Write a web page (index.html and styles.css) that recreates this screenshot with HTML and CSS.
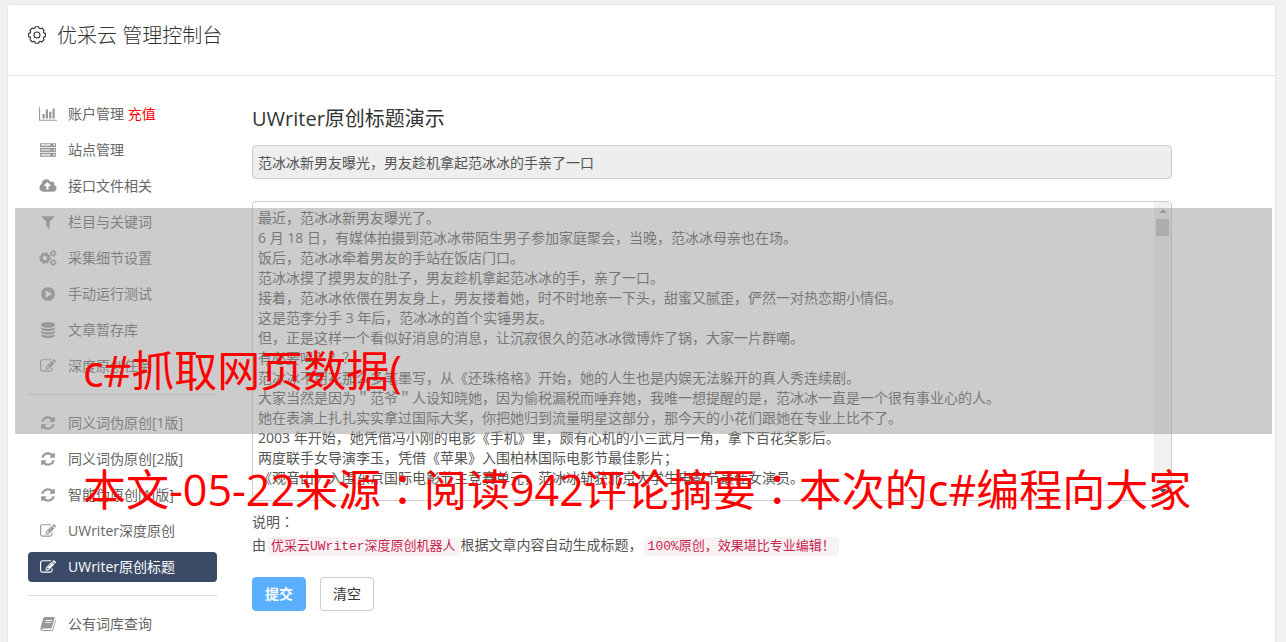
FILE: index.html
```html
<!DOCTYPE html>
<html lang="zh-CN">
<head>
<meta charset="utf-8">
<title>优采云 管理控制台</title>
<link rel="stylesheet" href="styles.css">
</head>
<body>
<svg class="sprite" aria-hidden="true">
  <symbol id="i-chart" viewBox="0 0 2048 1792"><path d="M640 896v512h-256v-512h256zm384-512v1024h-256v-1024h256zm1024 1152v128h-2048v-1536h128v1408h1920zm-640-896v768h-256v-768h256zm384-384v1152h-256v-1152h256z"/></symbol>
  <symbol id="i-server" viewBox="0 0 1792 1792"><path fill-rule="evenodd" d="M0 128h1792v448h-1792zM128 256v128h1024v-128zM1504 320a96 96 0 1 0 192 0a96 96 0 1 0-192 0zM0 672h1792v448h-1792zM128 832v128h1024v-128zM1504 896a96 96 0 1 0 192 0a96 96 0 1 0-192 0zM0 1216h1792v448h-1792zM128 1376v128h1024v-128zM1504 1440a96 96 0 1 0 192 0a96 96 0 1 0-192 0z"/></symbol>
  <symbol id="i-cloud" viewBox="0 0 1920 1792"><path d="M1280 864q0-14-9-23l-352-352q-9-9-23-9t-23 9l-351 351q-10 12-10 24 0 14 9 23t23 9h224v352q0 13 9.500 22.500t22.500 9.500h192q13 0 22.500-9.500t9.500-22.500v-352h224q13 0 22.500-9.500t9.500-22.500zm640 288q0 159-112.500 271.500t-271.500 112.500h-1088q-185 0-316.500-131.500t-131.500-316.500q0-130 70-240t188-165q-2-30-2-43 0-212 150-362t362-150q156 0 285.500 87t188.500 231q71-62 166-62 106 0 181 75t75 181q0 76-41 138 130 31 213.500 135.500t83.500 238.500z"/></symbol>
  <symbol id="i-filter" viewBox="0 0 1792 1792"><path d="M1595 295q17 41-14 70l-493 493v742q0 42-39 59-13 5-25 5-27 0-45-19l-256-256q-19-19-19-45v-486l-493-493q-31-29-14-70 17-39 59-39h1280q42 0 59 39z"/></symbol>
  <symbol id="i-cogs" viewBox="0 0 18 16"><g fill="none" stroke="currentColor"><circle cx="6" cy="8" r="3.500" stroke-width="2.600"/><circle cx="6" cy="8" r="5.200" stroke-width="1.600" stroke-dasharray="2.040 2.040"/><circle cx="14.200" cy="3.500" r="1.900" stroke-width="1.400"/><circle cx="14.200" cy="3.500" r="2.900" stroke-width="1" stroke-dasharray="1.500 1.500"/><circle cx="14.200" cy="12.500" r="1.900" stroke-width="1.400"/><circle cx="14.200" cy="12.500" r="2.900" stroke-width="1" stroke-dasharray="1.500 1.500"/></g></symbol>
  <symbol id="i-play" viewBox="0 0 1792 1792"><path d="M896 128q209 0 385.500 103t279.500 279.500 103 385.500-103 385.500-279.500 279.500-385.500 103-385.500-103-279.500-279.500-103-385.500 103-385.500 279.500-279.500 385.500-103zm384 823q32-18 32-55t-32-55l-544-320q-31-19-64-1-32 19-32 56v640q0 37 32 56 16 8 32 8 17 0 32-9z"/></symbol>
  <symbol id="i-db" viewBox="0 0 1792 1792"><path d="M896 768q237 0 443-43t325-127v170q0 69-103 128t-280 93.500-385 34.500-385-34.500-280-93.500-103-128v-170q119 84 325 127t443 43zm0 768q237 0 443-43t325-127v170q0 69-103 128t-280 93.500-385 34.500-385-34.500-280-93.500-103-128v-170q119 84 325 127t443 43zm0-384q237 0 443-43t325-127v170q0 69-103 128t-280 93.500-385 34.500-385-34.500-280-93.500-103-128v-170q119 84 325 127t443 43zm0-1152q208 0 385 34.500t280 93.500 103 128v128q0 69-103 128t-280 93.500-385 34.500-385-34.500-280-93.500-103-128v-128q0-69 103-128t280-93.500 385-34.500z"/></symbol>
  <symbol id="i-edit" viewBox="0 0 1792 1792"><path d="M888 1184l116-116-152-152-116 116v56h96v96h56zm440-720q-16-16-33 1l-350 350q-17 17-1 33t33-1l350-350q17-17 1-33zm80 594v190q0 119-84.500 203.500t-203.500 84.500h-832q-119 0-203.500-84.500t-84.500-203.500v-832q0-119 84.500-203.500t203.500-84.500h832q63 0 117 25 15 7 18 23 3 17-9 29l-49 49q-14 14-32 8-23-6-45-6h-832q-66 0-113 47t-47 113v832q0 66 47 113t113 47h832q66 0 113-47t47-113v-126q0-13 9-22l64-64q15-15 35-7t20 29zm-96-738l288 288-672 672h-288v-288zm444 132l-92 92-288-288 92-92q28-28 68-28t68 28l152 152q28 28 28 68t-28 68z"/></symbol>
  <symbol id="i-refresh" viewBox="0 0 1792 1792"><path d="M1639 1056q0 5-1 7-64 268-268 434.500t-478 166.500q-146 0-282.500-55t-243.500-157l-129 129q-19 19-45 19t-45-19-19-45v-448q0-26 19-45t45-19h448q26 0 45 19t19 45-19 45l-137 137q71 66 161 102t187 36q134 0 250-65t186-179q11-17 53-117 8-23 30-23h192q13 0 22.500 9.500t9.500 22.500zm25-800v448q0 26-19 45t-45 19h-448q-26 0-45-19t-19-45 19-45l138-138q-148-137-349-137-134 0-250 65t-186 179q-11 17-53 117-8 23-30 23h-199q-13 0-22.500-9.500t-9.500-22.500v-7q65-268 270-434.500t480-166.500q146 0 284 55.500t245 156.500l130-129q19-19 45-19t45 19 19 45z"/></symbol>
  <symbol id="i-book" viewBox="0 0 16 16"><path fill-rule="evenodd" d="M5 1h8.500q1.500 0 1 1.600l-2.700 9q-.3 1-1.300 1H2.600q-.8 0-.6.900.2.500 1.200.500h8.300q.7 0 1-.8l3-9.800q.8.600.4 1.700l-2.700 8.700q-.4 1.200-1.700 1.200H3q-2 0-2.500-1.700-.2-.6 0-1.300L3 3Q3.600 1 5 1zM6 4l-.3.900h6.200l.3-.9zM5.300 6.200l-.3.900h6.200l.3-.9z"/></symbol>
</svg>

<div class="panel">
  <header class="header">
    <svg class="gear" viewBox="0 0 18 18" aria-hidden="true"><g fill="none" stroke="currentColor" stroke-width="1.100" stroke-linejoin="round"><path d="M7.300.7h3.400l.5 1.700 1 .4 1.600-.8 2.300 2.300-.8 1.600.4 1 1.700.5v3.200l-1.700.5-.4 1 .8 1.600-2.300 2.300-1.600-.8-1 .4-.5 1.700H7.300l-.5-1.700-1-.4-1.600.8-2.300-2.300.8-1.600-.4-1-1.700-.5V7.400l1.700-.5.4-1-.8-1.600L4.200 2l1.600.8 1-.4z"/><circle cx="9" cy="9" r="3"/></g></svg>
    <h1 class="title">优采云 管理控制台</h1>
  </header>
  <div class="body">
    <nav class="sidebar">
      <a class="item" href="#"><svg class="icon icon-wide"><use href="#i-chart"/></svg><span>账户管理 <span class="hot">充值</span></span></a>
      <a class="item" href="#"><svg class="icon"><use href="#i-server"/></svg>站点管理</a>
      <a class="item" href="#"><svg class="icon icon-wide"><use href="#i-cloud"/></svg>接口文件相关</a>
      <a class="item" href="#"><svg class="icon"><use href="#i-filter"/></svg>栏目与关键词</a>
      <a class="item" href="#"><svg class="icon icon-wide"><use href="#i-cogs"/></svg>采集细节设置</a>
      <a class="item" href="#"><svg class="icon"><use href="#i-play"/></svg>手动运行测试</a>
      <a class="item" href="#"><svg class="icon"><use href="#i-db"/></svg>文章暂存库</a>
      <a class="item" href="#"><svg class="icon"><use href="#i-edit"/></svg>深度原创任务</a>
      <hr class="rule">
      <a class="item" href="#"><svg class="icon"><use href="#i-refresh"/></svg>同义词伪原创[1版]</a>
      <a class="item" href="#"><svg class="icon"><use href="#i-refresh"/></svg>同义词伪原创[2版]</a>
      <a class="item" href="#"><svg class="icon"><use href="#i-refresh"/></svg>智能伪原创[AI版]</a>
      <a class="item" href="#"><svg class="icon"><use href="#i-edit"/></svg>UWriter深度原创</a>
      <a class="item item-active" href="#" aria-current="page"><svg class="icon"><use href="#i-edit"/></svg>UWriter原创标题</a>
      <hr class="rule">
      <a class="item" href="#"><svg class="icon"><use href="#i-book"/></svg>公有词库查询</a>
    </nav>
    <main class="main">
      <form class="form">
        <h2 class="subtitle"><label for="topic">UWriter原创标题演示</label></h2>
        <input class="field topic" id="topic" type="text" readonly value="范冰冰新男友曝光，男友趁机拿起范冰冰的手亲了一口">
        <div class="editor">
          <textarea class="field article" aria-label="文章内容">最近，范冰冰新男友曝光了。
6 月 18 日，有媒体拍摄到范冰冰带陌生男子参加家庭聚会，当晚，范冰冰母亲也在场。
饭后，范冰冰牵着男友的手站在饭店门口。
范冰冰摸了摸男友的肚子，男友趁机拿起范冰冰的手，亲了一口。
接着，范冰冰依偎在男友身上，男友搂着她，时不时地亲一下头，甜蜜又腻歪，俨然一对热恋期小情侣。
这是范李分手 3 年后，范冰冰的首个实锤男友。
但，正是这样一个看似好消息的消息，让沉寂很久的范冰冰微博炸了锅，大家一片群嘲。
有必要吗？？？
范冰冰不用花那么多笔墨写，从《还珠格格》开始，她的人生也是内娱无法躲开的真人秀连续剧。
大家当然是因为＂范爷＂人设知晓她，因为偷税漏税而唾弃她，我唯一想提醒的是，范冰冰一直是一个很有事业心的人。
她在表演上扎扎实实拿过国际大奖，你把她归到流量明星这部分，那今天的小花们跟她在专业上比不了。
2003 年开始，她凭借冯小刚的电影《手机》里，颇有心机的小三武月一角，拿下百花奖影后。
两度联手女导演李玉，凭借《苹果》入围柏林国际电影节最佳影片；
《观音山》入围东京国际电影节主竞赛单元，范冰冰斩获北京大学生电影节最佳女演员。</textarea>
          <div class="scroll" aria-hidden="true"><span class="arrow-up"></span><span class="thumb"></span><span class="arrow-down"></span></div>
        </div>
        <p class="note">说明<span class="centered" lang="zh-TW">：</span></p>
        <p class="note">由<code class="code">优采云UWriter深度原创机器人</code>根据文章内容自动生成标题，<code class="code">100%原创，效果堪比专业编辑！</code></p>
        <div class="actions">
          <button class="btn btn-primary" type="button">提交</button>
          <button class="btn" type="button">清空</button>
        </div>
      </form>
    </main>
  </div>
</div>

<div class="band"></div>
<p class="caption caption-top">c#抓取网页数据(</p>
<p class="caption caption-bottom">本文-05-22来源<span class="centered" lang="zh-TW">：</span>阅读942评论摘要<span class="centered" lang="zh-TW">：</span>本次的c#编程向大家</p>
</body>
</html>
```

FILE: styles.css
```css
* {
  box-sizing: border-box;
}

html {
  height: 100%;
  overflow: hidden;
}

body {
  height: 100%;
  margin: 0;
  padding: 4px 10px 0 7px;
  overflow: hidden;
  position: relative;
  background: #f1f1f1;
  color: #555;
  font: 14px/20px "Open Sans", "Noto Sans CJK SC", sans-serif;
}

.sprite {
  display: none;
}

.panel {
  min-height: 100%;
  background: #fff;
  border: 1px solid #e5e5e5;
  border-bottom: 0;
  border-radius: 4px 4px 0 0;
}

.header {
  display: flex;
  align-items: center;
  gap: 11px;
  padding: 16px 20px 24px;
  border-bottom: 1px solid #e5e5e5;
  color: #333;
}

.gear {
  width: 18px;
  height: 18px;
  margin-bottom: 2px;
}

.title {
  margin: 0;
  font-size: 20px;
  line-height: 30px;
  font-weight: 300;
}

.body {
  display: flex;
  gap: 35px;
  padding: 23px 20px 0;
}

.sidebar {
  display: flex;
  flex-direction: column;
  gap: 6px;
  width: 189px;
  flex: none;
}

.item {
  display: flex;
  align-items: center;
  gap: 10px;
  height: 30px;
  padding: 0 10px;
  border-radius: 4px;
  color: #666;
  text-decoration: none;
  white-space: nowrap;
}

.item-active {
  background: #3b4a66;
  color: #fff;
}

.icon {
  width: 16px;
  height: 16px;
  margin: 0 2px;
  flex: none;
  color: #999;
  fill: currentColor;
}

.icon-wide {
  width: 18px;
  margin: 0 1px;
}

.item-active .icon {
  color: #fff;
}

.hot {
  color: #f00;
}

.rule {
  width: 100%;
  height: 1px;
  margin: 7px 0;
  border: 0;
  background: #ddd;
}

.main {
  flex: 1;
  min-width: 0;
  padding-right: 83px;
}

.form {
  display: flex;
  flex-direction: column;
}

.subtitle {
  margin: 5px 0 11px;
  color: #333;
  font-size: 20px;
  line-height: 30px;
  font-weight: 400;
}

.field {
  display: block;
  width: 100%;
  padding: 6px 5px;
  border: 1px solid #ccc;
  border-radius: 4px;
  background: #fff;
  color: #555;
  font: inherit;
}

.topic {
  height: 34px;
  background: #eee;
}

.editor {
  position: relative;
  margin: 22px 0 10px;
}

.article {
  height: 300px;
  padding-right: 24px;
  resize: none;
  overflow-y: auto;
  scrollbar-width: none;
}

.scroll {
  position: absolute;
  top: 1px;
  right: 1px;
  bottom: 1px;
  width: 17px;
  display: flex;
  flex-direction: column;
  align-items: center;
  padding: 7px 0;
  background: #f1f1f1;
  border-radius: 0 3px 3px 0;
}

.arrow-up,
.arrow-down {
  border: 4px solid transparent;
}

.arrow-up {
  border-top: 0;
  border-bottom-color: #a3a3a3;
}

.arrow-down {
  margin-top: auto;
  border-bottom: 0;
  border-top-color: #505050;
}

.thumb {
  width: 13px;
  height: 17px;
  margin-top: 6px;
  background: #c1c1c1;
}

.note {
  margin: 0 0 3px;
  color: #555;
}

.centered {
  font-family: "Noto Sans CJK TC", sans-serif;
}

.code {
  margin: 0 1px;
  padding: 2px 4px;
  border-radius: 4px;
  background: #f9f2f4;
  color: #c7254e;
  font: 13px/16px "Liberation Mono", "Noto Sans CJK SC", monospace;
}

.actions {
  display: flex;
  gap: 14px;
  padding: 19px 0 8px;
}

.btn {
  height: 34px;
  padding: 6px 12px;
  border: 1px solid #ccc;
  border-radius: 4px;
  background: #fff;
  color: #333;
  font: inherit;
}

.btn-primary {
  border-color: #5ab0ff;
  background: #5ab0ff;
  color: #fff;
  font-weight: 700;
}

.band {
  position: absolute;
  top: 208px;
  left: 15px;
  right: 14px;
  height: 226px;
  background: rgba(153, 153, 153, 0.5);
}

.caption {
  position: absolute;
  left: 83px;
  margin: 0;
  color: #f00;
  font-size: 43px;
  line-height: 60px;
  white-space: nowrap;
}

.caption-top {
  top: 341px;
}

.caption-bottom {
  top: 457px;
}
```
